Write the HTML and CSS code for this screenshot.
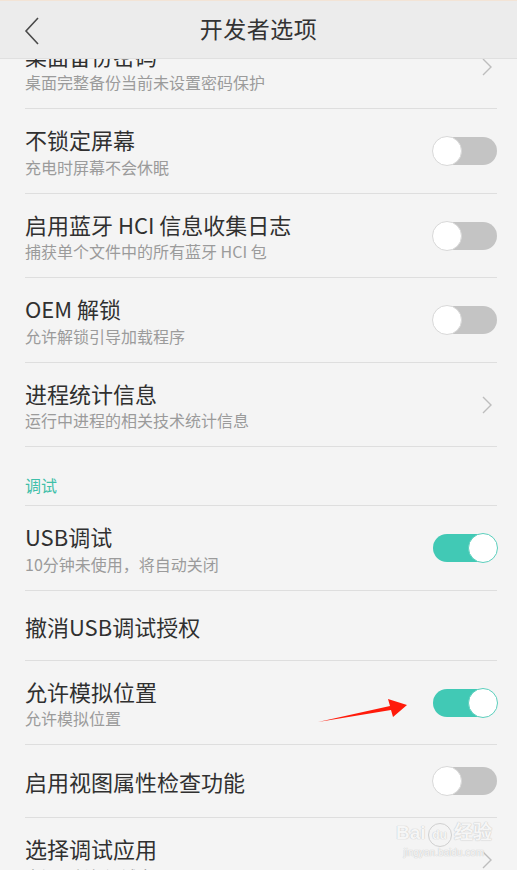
FILE: index.html
```html
<!DOCTYPE html>
<html lang="zh-CN">
<head>
    <meta charset="UTF-8">
    <meta name="viewport" content="width=device-width, initial-scale=1.0">
    <title>开发者选项</title>
    <link rel="stylesheet" href="styles.css">
</head>
<body>
    <div class="header">
        <svg class="back" width="18" height="30" viewBox="0 0 18 30">
            <polyline points="15,2 3,15 15,28" fill="none" stroke="#4a4a4a" stroke-width="1.6"/>
        </svg>
        <div class="title">开发者选项</div>
    </div>

    <div class="list">
        <div class="row">
            <div class="text">
                <div class="name">桌面备份密码</div>
                <div class="desc">桌面完整备份当前未设置密码保护</div>
            </div>
            <svg class="chev" width="12" height="20" viewBox="0 0 12 20"><polyline points="2,2 10,10 2,18" fill="none" stroke="#bdbdbd" stroke-width="1.4"/></svg>
        </div>
        <div class="row">
            <div class="text">
                <div class="name">不锁定屏幕</div>
                <div class="desc">充电时屏幕不会休眠</div>
            </div>
            <div class="switch"><span class="knob"></span></div>
        </div>
        <div class="row">
            <div class="text">
                <div class="name">启用蓝牙 HCI 信息收集日志</div>
                <div class="desc">捕获单个文件中的所有蓝牙 HCI 包</div>
            </div>
            <div class="switch"><span class="knob"></span></div>
        </div>
        <div class="row">
            <div class="text">
                <div class="name">OEM 解锁</div>
                <div class="desc">允许解锁引导加载程序</div>
            </div>
            <div class="switch"><span class="knob"></span></div>
        </div>
        <div class="row">
            <div class="text">
                <div class="name">进程统计信息</div>
                <div class="desc">运行中进程的相关技术统计信息</div>
            </div>
            <svg class="chev" width="12" height="20" viewBox="0 0 12 20"><polyline points="2,2 10,10 2,18" fill="none" stroke="#bdbdbd" stroke-width="1.4"/></svg>
        </div>

        <div class="section">调试</div>

        <div class="row">
            <div class="text">
                <div class="name">USB调试</div>
                <div class="desc">10分钟未使用，将自动关闭</div>
            </div>
            <div class="switch on"><span class="knob"></span></div>
        </div>
        <div class="row single short">
            <div class="text">
                <div class="name">撤消USB调试授权</div>
            </div>
        </div>
        <div class="row">
            <div class="text">
                <div class="name">允许模拟位置</div>
                <div class="desc">允许模拟位置</div>
            </div>
            <div class="switch on"><span class="knob"></span></div>
        </div>
        <div class="row single">
            <div class="text">
                <div class="name">启用视图属性检查功能</div>
            </div>
            <div class="switch"><span class="knob"></span></div>
        </div>
        <div class="row">
            <div class="text">
                <div class="name">选择调试应用</div>
                <div class="desc">未设置任何调试应用</div>
            </div>
            <svg class="chev" width="12" height="20" viewBox="0 0 12 20"><polyline points="2,2 10,10 2,18" fill="none" stroke="#bdbdbd" stroke-width="1.4"/></svg>
        </div>
    </div>

    <!-- red arrow drawn over the screenshot -->
    <svg class="arrow" width="517" height="870" viewBox="0 0 517 870">
        <polygon points="318,722 390,706 388,699 407,705 393,717 391,710" fill="#ff1a0a"/>
    </svg>

    <div class="watermark">
        <div class="wm-logo">Bai<span class="wm-du">du</span>经验</div>
        <div class="wm-url">jingyan.baidu.com</div>
    </div>
</body>
</html>
```

FILE: styles.css
```css
body {
    margin: 0;
    background-color: #f4f4f4;
    font-family: "Noto Sans CJK SC", "Noto Sans", sans-serif;
    width: 517px;
    height: 870px;
    overflow: hidden;
    position: relative;
}
.header {
    position: absolute;
    top: 0;
    left: 0;
    right: 0;
    height: 59px;
    box-sizing: border-box;
    padding-bottom: 4px;
    background-color: #ececec;
    border-top: 1px solid #f3e4d6;
    border-bottom: 1px solid #e0e0e0;
    z-index: 2;
    display: flex;
    align-items: center;
    justify-content: center;
}
.back {
    position: absolute;
    left: 23px;
    top: 15px;
}
.title {
    font-size: 23px;
    color: #333;
    letter-spacing: 0.5px;
}
.list {
    padding-top: 24.5px;
}
.row {
    margin: 0 20px 0 25px;
    padding: 17px 0 16px;
    border-bottom: 1px solid #dedede;
    display: flex;
    align-items: center;
    justify-content: space-between;
}
.row.single {
    padding: 22px 0 22px;
}
.row.short {
    padding: 22px 0 21px;
}
.name {
    font-size: 22px;
    line-height: 26px;
    color: #303030;
}
.desc {
    margin-top: 4.5px;
    font-size: 16px;
    line-height: 20px;
    color: #9b9b9b;
}
.chev {
    margin-right: 4px;
}
.section {
    margin: 0 20px 0 25px;
    padding: 27px 0 9px;
    line-height: 22px;
    font-size: 16px;
    color: #3fbfa9;
    border-bottom: 1px solid #dedede;
}
.switch {
    width: 64px;
    height: 28px;
    border-radius: 14px;
    background-color: #c4c4c4;
    position: relative;
    flex-shrink: 0;
}
.knob {
    position: absolute;
    top: -1px;
    left: -1px;
    width: 28px;
    height: 28px;
    border-radius: 50%;
    background-color: #fff;
    border: 1px solid #d8d8d8;
}
.switch.on {
    background-color: #41c9b5;
}
.switch.on .knob {
    left: auto;
    right: -1px;
    border-color: #5ccfbd;
}
.arrow {
    position: absolute;
    top: 0;
    left: 0;
    pointer-events: none;
}
.watermark {
    position: absolute;
    left: 396px;
    top: 822px;
    color: rgba(255, 255, 255, 0.85);
    text-shadow: 0 0 1px #c8c8c8, 0 0 1px #c8c8c8;
    text-align: center;
}
.wm-logo {
    font-family: "Liberation Sans", sans-serif;
    font-size: 19px;
    font-weight: bold;
    line-height: 22px;
}
.wm-du {
    display: inline-block;
    width: 22px;
    height: 22px;
    border-radius: 50%;
    border: 1px solid #d0d0d0;
    font-size: 12px;
    margin: 0 2px;
}
.wm-url {
    font-family: "Liberation Sans", sans-serif;
    font-size: 10px;
    line-height: 12px;
}
```
